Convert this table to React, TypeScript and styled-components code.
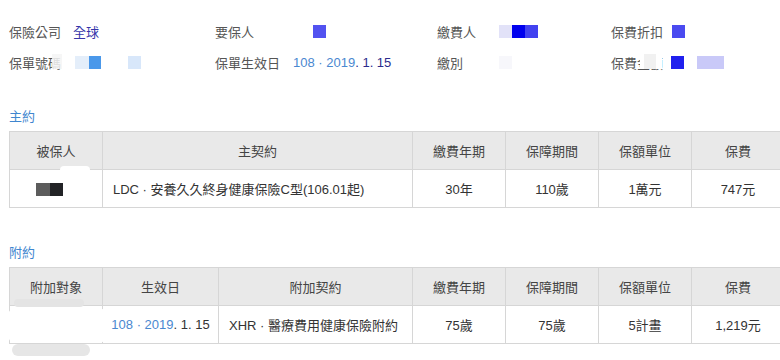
import React from 'react';
import styled, { createGlobalStyle } from 'styled-components';

const GlobalStyle = createGlobalStyle`
  html, body {
    margin: 0;
    padding: 0;
    overflow: hidden;
    background: #ffffff;
    font-family: "Liberation Sans", "Noto Sans CJK TC", sans-serif;
  }
`;

const Page = styled.div`
  width: 780px;
  height: 360px;
  overflow: hidden;
  padding: 23px 0 0 9px;
  box-sizing: border-box;
`;

const InfoGrid = styled.div`
  display: grid;
  grid-template-columns: 206px 222px 174px 169px;
  row-gap: 14px;
`;

const Field = styled.div`
  display: flex;
  align-items: center;
  height: 17px;
  font-size: 13px;
`;

const Label = styled.span<{ $w: number }>`
  position: relative;
  width: ${(p) => p.$w}px;
  flex: none;
  color: #555;
  white-space: nowrap;
`;

const Value = styled.span<{ $color?: string }>`
  color: ${(p) => p.$color || '#333'};
  white-space: nowrap;
`;

const Blocks = styled.span`
  display: flex;
  align-items: center;
`;

const Pix = styled.span<{ $c: string; $w?: number; $gap?: number }>`
  display: inline-block;
  width: ${(p) => p.$w ?? 13}px;
  height: 13px;
  margin-left: ${(p) => p.$gap ?? 0}px;
  background: ${(p) => p.$c};
`;

const Cover = styled.span<{ $c: string; $x: number; $w: number }>`
  position: absolute;
  left: ${(p) => p.$x}px;
  top: 1px;
  width: ${(p) => p.$w}px;
  height: 15px;
  background: ${(p) => p.$c};
`;

const Blue = styled.span`
  color: #4a88d0;
`;

const Navy = styled.span`
  color: #2b2b8c;
`;

const SectionTitle = styled.div<{ $top: number }>`
  margin-top: ${(p) => p.$top}px;
  height: 16px;
  line-height: 16px;
  font-size: 13px;
  color: #3f86cf;
`;

const Table = styled.table`
  margin-top: 6px;
  width: 775px;
  border-collapse: collapse;
  table-layout: fixed;
  font-size: 13px;
  color: #333;
`;

const Th = styled.th`
  height: 37px;
  padding: 0;
  background: #e9e9e9;
  border: 1px solid #d6d6d6;
  font-weight: normal;
  color: #444;
  text-align: center;
`;

const Td = styled.td<{ $left?: boolean }>`
  position: relative;
  height: 37px;
  padding: 0 ${(p) => (p.$left ? '10px' : '0')};
  border: 1px solid #d6d6d6;
  text-align: ${(p) => (p.$left ? 'left' : 'center')};
  white-space: nowrap;
`;

const Redact = styled.span`
  display: inline-flex;
  vertical-align: middle;
  margin-right: 14px;
`;

const Smudge = styled.span<{ $c: string }>`
  position: absolute;
  background: ${(p) => p.$c};
  border-radius: 6px;
`;

const App: React.FC = () => {
  return (
    <Page>
      <GlobalStyle />
      <InfoGrid>
        <Field>
          <Label $w={64}>保險公司</Label>
          <Value $color="#3535aa">全球</Value>
        </Field>
        <Field>
          <Label $w={98}>要保人</Label>
          <Pix $c="#5252f0" />
        </Field>
        <Field>
          <Label $w={62}>繳費人</Label>
          <Blocks>
            <Pix $c="#e2e2f8" />
            <Pix $c="#0000ee" />
            <Pix $c="#4242f0" />
          </Blocks>
        </Field>
        <Field>
          <Label $w={61}>保費折扣</Label>
          <Pix $c="#4a4af0" />
        </Field>

        <Field>
          <Label $w={66}>
            保單號碼
            <Cover $c="rgba(244,244,244,0.85)" $x={43} $w={10} />
            <Cover $c="#ffffff" $x={53} $w={10} />
          </Label>
          <Blocks>
            <Pix $c="#e4eefa" $w={14} />
            <Pix $c="#4a98ea" $w={12} />
            <Pix $c="#d8e7fa" $gap={27} />
          </Blocks>
        </Field>
        <Field>
          <Label $w={78}>保單生效日</Label>
          <Value>
            <Blue>108 · 2019</Blue>
            <Navy>. 1. 15</Navy>
          </Value>
        </Field>
        <Field>
          <Label $w={62}>繳別</Label>
          <Pix $c="#f7f7fb" />
        </Field>
        <Field>
          <Label $w={60}>
            保費金額
            <Cover $c="#ffffff" $x={29} $w={22} />
            <Cover $c="#f1f1f1" $x={33} $w={12} />
          </Label>
          <Blocks>
            <Pix $c="#2020ee" />
            <Pix $c="#c9c9f8" $w={27} $gap={13} />
          </Blocks>
        </Field>
      </InfoGrid>

      <SectionTitle $top={38}>主約</SectionTitle>
      <Table>
        <colgroup>
          <col style={{ width: 93 }} />
          <col style={{ width: 310 }} />
          <col style={{ width: 93 }} />
          <col style={{ width: 93 }} />
          <col style={{ width: 93 }} />
          <col style={{ width: 93 }} />
        </colgroup>
        <thead>
          <tr>
            <Th>被保人</Th>
            <Th>主契約</Th>
            <Th>繳費年期</Th>
            <Th>保障期間</Th>
            <Th>保額單位</Th>
            <Th>保費</Th>
          </tr>
        </thead>
        <tbody>
          <tr>
            <Td>
              <Smudge $c="#ffffff" style={{ left: 50, top: -4, width: 30, height: 8 }} />
              <Redact>
                <Pix $c="#5c5c5c" $w={14} />
                <Pix $c="#222326" />
              </Redact>
            </Td>
            <Td $left>LDC · 安養久久終身健康保險C型(106.01起)</Td>
            <Td>30年</Td>
            <Td>110歲</Td>
            <Td>1萬元</Td>
            <Td>747元</Td>
          </tr>
        </tbody>
      </Table>

      <SectionTitle $top={37}>附約</SectionTitle>
      <Table>
        <colgroup>
          <col style={{ width: 93 }} />
          <col style={{ width: 116 }} />
          <col style={{ width: 194 }} />
          <col style={{ width: 93 }} />
          <col style={{ width: 93 }} />
          <col style={{ width: 93 }} />
          <col style={{ width: 93 }} />
        </colgroup>
        <thead>
          <tr>
            <Th>附加對象</Th>
            <Th>生效日</Th>
            <Th>附加契約</Th>
            <Th>繳費年期</Th>
            <Th>保障期間</Th>
            <Th>保額單位</Th>
            <Th>保費</Th>
          </tr>
        </thead>
        <tbody>
          <tr>
            <Td>
              <Smudge $c="#e4e4e4" style={{ left: 4, top: -7, width: 70, height: 8 }} />
              <Smudge $c="#ffffff" style={{ left: -2, top: 3, width: 100, height: 33 }} />
              <Smudge $c="#e6e6e6" style={{ left: 2, top: 38, width: 78, height: 12 }} />
            </Td>
            <Td>
              <Blue>108 · 2019</Blue>. 1. 15
            </Td>
            <Td $left>XHR · 醫療費用健康保險附約</Td>
            <Td>75歲</Td>
            <Td>75歲</Td>
            <Td>5計畫</Td>
            <Td>1,219元</Td>
          </tr>
        </tbody>
      </Table>
    </Page>
  );
};

export default App;
